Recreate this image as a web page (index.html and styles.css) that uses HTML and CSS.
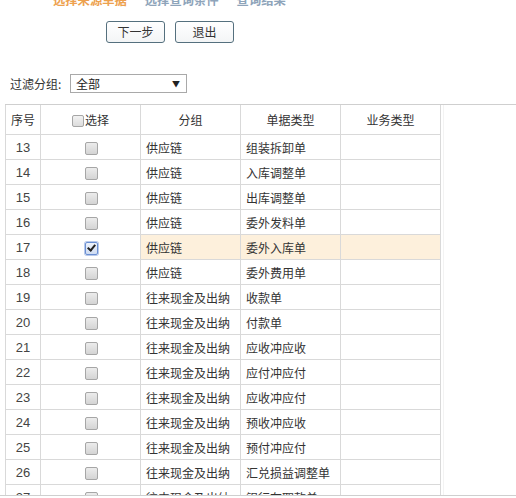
FILE: index.html
```html
<!DOCTYPE html>
<html lang="zh">
<head>
<meta charset="utf-8">
<title>选择来源单据</title>
<link rel="stylesheet" href="styles.css">
</head>
<body>
<div class="tabs">
  <span class="tab active">选择来源单据</span>
  <span class="tab">选择查询条件</span>
  <span class="tab">查询结果</span>
</div>
<div class="actions">
  <button class="btn">下一步</button>
  <button class="btn">退出</button>
</div>
<div class="filter">
  <span class="label">过滤分组:</span>
  <div class="select"><span>全部</span><span class="arrow">▼</span></div>
</div>
<div class="grid">
  <div class="grid-line"></div>
  <table class="tbl">
    <colgroup><col class="c-no"><col class="c-chk"><col class="c-grp"><col class="c-type"><col class="c-biz"></colgroup>
    <thead>
      <tr><th>序号</th><th><span class="cb head-cb"></span>选择</th><th>分组</th><th>单据类型</th><th>业务类型</th></tr>
    </thead>
    <tbody>
      <tr><td class="no">13</td><td class="chk"><span class="cb"></span></td><td>供应链</td><td>组装拆卸单</td><td></td></tr>
      <tr><td class="no">14</td><td class="chk"><span class="cb"></span></td><td>供应链</td><td>入库调整单</td><td></td></tr>
      <tr><td class="no">15</td><td class="chk"><span class="cb"></span></td><td>供应链</td><td>出库调整单</td><td></td></tr>
      <tr><td class="no">16</td><td class="chk"><span class="cb"></span></td><td>供应链</td><td>委外发料单</td><td></td></tr>
      <tr class="sel"><td class="no">17</td><td class="chk"><span class="cb on"></span></td><td>供应链</td><td>委外入库单</td><td></td></tr>
      <tr><td class="no">18</td><td class="chk"><span class="cb"></span></td><td>供应链</td><td>委外费用单</td><td></td></tr>
      <tr><td class="no">19</td><td class="chk"><span class="cb"></span></td><td>往来现金及出纳</td><td>收款单</td><td></td></tr>
      <tr><td class="no">20</td><td class="chk"><span class="cb"></span></td><td>往来现金及出纳</td><td>付款单</td><td></td></tr>
      <tr><td class="no">21</td><td class="chk"><span class="cb"></span></td><td>往来现金及出纳</td><td>应收冲应收</td><td></td></tr>
      <tr><td class="no">22</td><td class="chk"><span class="cb"></span></td><td>往来现金及出纳</td><td>应付冲应付</td><td></td></tr>
      <tr><td class="no">23</td><td class="chk"><span class="cb"></span></td><td>往来现金及出纳</td><td>应收冲应付</td><td></td></tr>
      <tr><td class="no">24</td><td class="chk"><span class="cb"></span></td><td>往来现金及出纳</td><td>预收冲应收</td><td></td></tr>
      <tr><td class="no">25</td><td class="chk"><span class="cb"></span></td><td>往来现金及出纳</td><td>预付冲应付</td><td></td></tr>
      <tr><td class="no">26</td><td class="chk"><span class="cb"></span></td><td>往来现金及出纳</td><td>汇兑损益调整单</td><td></td></tr>
      <tr><td class="no">27</td><td class="chk"><span class="cb"></span></td><td>往来现金及出纳</td><td>银行存取款单</td><td></td></tr>
      <tr><td class="no">28</td><td class="chk"><span class="cb"></span></td><td>往来现金及出纳</td><td>现金存取款单</td><td></td></tr>
    </tbody>
  </table>
</div>
<div class="footer"></div>
</body>
</html>
```

FILE: styles.css
```css
html, body {
  margin: 0;
  padding: 0;
  overflow: hidden;
  background: #fff;
}
body {
  font-family: "Liberation Sans", "Noto Sans CJK SC", sans-serif;
  font-size: 12px;
  color: #333;
  width: 516px;
  height: 498px;
}
.tabs {
  display: flex;
  gap: 18px;
  padding-left: 53px;
  height: 8px;
  line-height: 14px;
  margin-top: -7px;
}
.tab {
  font-size: 12.3px;
  font-weight: bold;
  color: #8ea4ba;
  font-family: "Noto Sans CJK SC", sans-serif;
}
.tab.active {
  color: #eda14e;
}
.actions {
  display: flex;
  gap: 10px;
  padding-left: 106px;
  margin-top: 20px;
}
.btn {
  width: 59px;
  height: 22px;
  margin: 0;
  padding: 0;
  border: 1px solid #55707e;
  border-radius: 3px;
  background: linear-gradient(#ffffff, #f3f5f6);
  font-family: "Noto Sans CJK SC", sans-serif;
  font-size: 12px;
  color: #333;
  line-height: 20px;
}
.filter {
  display: flex;
  align-items: center;
  padding-left: 10px;
  margin-top: 31px;
  height: 19px;
}
.label {
  font-family: "Noto Sans CJK SC", sans-serif;
  font-size: 12px;
  color: #333;
  width: 60px;
}
.select {
  box-sizing: border-box;
  width: 117px;
  height: 19px;
  border: 1px solid #a9a9a9;
  display: flex;
  align-items: center;
  justify-content: space-between;
  padding: 0 6px 0 5px;
  font-family: "Noto Sans CJK SC", sans-serif;
  font-size: 12px;
  color: #222;
}
.arrow {
  font-size: 8px;
  color: #222;
}
.grid {
  position: relative;
  margin-top: 11px;
  margin-left: 5px;
  height: 390px;
  overflow: hidden;
  border-top: 1px solid #cfcfcf;
}
.grid-line {
  position: absolute;
  left: 438px;
  top: 0;
  bottom: 0;
  width: 1px;
  background: #f3f3f3;
}
.tbl {
  border-collapse: collapse;
  table-layout: fixed;
  width: 436px;
  margin-top: -1px;
}
.c-no { width: 35px; }
.c-chk, .c-grp, .c-type, .c-biz { width: 100px; }
.tbl th, .tbl td {
  border: 1px solid #d9d9d9;
  padding: 0 5px;
  white-space: nowrap;
  overflow: hidden;
  font-family: "Noto Sans CJK SC", sans-serif;
  font-size: 12px;
  font-weight: normal;
  color: #333;
}
.tbl th {
  height: 29px;
  text-align: center;
}
.tbl td {
  height: 24px;
  text-align: left;
}
.tbl td.no {
  font-family: "Liberation Sans", sans-serif;
  font-size: 13px;
  color: #444;
  text-align: center;
  padding: 0;
}
.tbl td.chk {
  text-align: center;
  padding: 0 0 0 2px;
}
.tbl tr.sel td:nth-child(n+3) {
  background: #fdf0dc;
}
.cb {
  display: inline-block;
  box-sizing: border-box;
  width: 13px;
  height: 13px;
  border: 1px solid #a6a6a6;
  border-radius: 2px;
  background: linear-gradient(#ececec, #d4d4d4);
  vertical-align: middle;
  position: relative;
  top: -1px;
}
.head-cb {
  width: 12px;
  height: 12px;
  margin-right: 1px;
  background: linear-gradient(#f2f2f2, #dcdcdc);
}
.cb.on {
  border-color: #6a8fd3;
  background: linear-gradient(#eef3fb, #cfdcf2);
  box-shadow: 0 0 0 1px #b8c9ea;
}
.cb.on::after {
  content: "";
  position: absolute;
  left: 3px;
  top: 0px;
  width: 3px;
  height: 6px;
  border: solid #222;
  border-width: 0 2px 2px 0;
  transform: rotate(40deg);
}
.footer {
  border-top: 1px solid #cfcfcf;
  height: 4px;
}
```
